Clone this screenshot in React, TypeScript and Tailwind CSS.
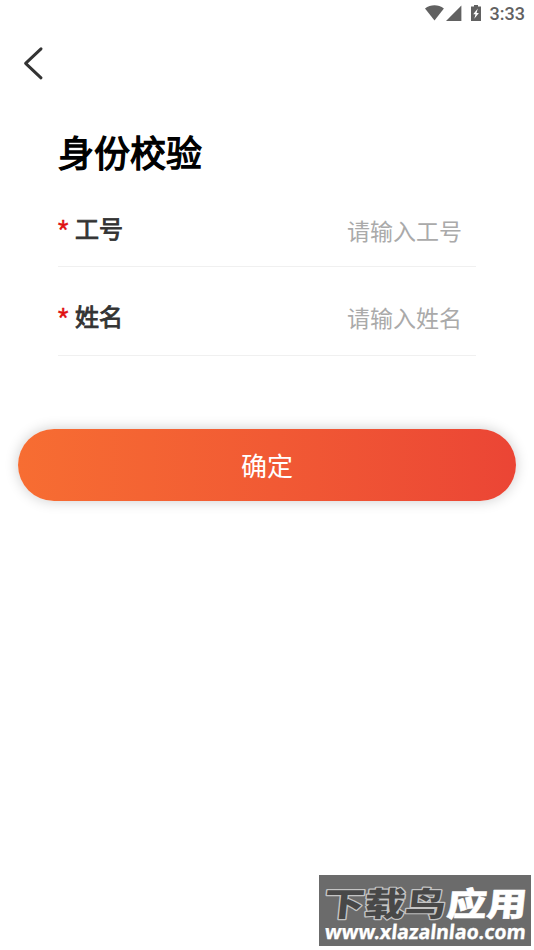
import { useState } from 'react'

interface Field {
  name: string
  label: string
  placeholder: string
}

const fields: Field[] = [
  { name: 'jobNumber', label: '工号', placeholder: '请输入工号' },
  { name: 'fullName', label: '姓名', placeholder: '请输入姓名' },
]

function StatusBar() {
  return (
    <div className="flex h-[27px] items-center justify-end pr-[9px] text-[#616161]">
      <svg className="h-[27px] w-[66px]" viewBox="0 0 66 27" fill="currentColor">
        {/* wifi */}
        <path d="M1 8.6C6.7 4.2 14.2 4.2 19.9 8.6L10.5 20.5Z" />
        {/* signal */}
        <path d="M37.4 5.5V21H22Z" />
        {/* charging battery */}
        <path
          fillRule="evenodd"
          d="M50 5h4v1.4h3V21H47V6.4h3ZM53.8 8.6l-4.6 5.6h2.3l-1.2 4.6 4.6-5.8h-2.3Z"
        />
      </svg>
      <span className="font-['Roboto',sans-serif] text-[18px] leading-[27px] font-medium">3:33</span>
    </div>
  )
}

function SiteBadge() {
  return (
    <div className="absolute top-[875px] left-[319px] h-[71px] w-[212px] bg-[#6b6b6b]">
      <svg className="h-full w-full" viewBox="0 0 212 71">
        <g
          transform="translate(8 0) skewX(-6)"
          fontFamily="'Noto Sans CJK SC', sans-serif"
          fontWeight="900"
          fontSize="33"
          strokeLinejoin="round"
        >
          <text
            x="0"
            y="41"
            textLength="122"
            lengthAdjust="spacingAndGlyphs"
            fill="#484848"
            stroke="#c4c4c4"
            strokeWidth="2.4"
            paintOrder="stroke"
          >
            下载鸟
          </text>
          <text
            x="123"
            y="41"
            textLength="80"
            lengthAdjust="spacingAndGlyphs"
            fill="#fff"
            stroke="#fff"
            strokeWidth="0.5"
          >
            应用
          </text>
        </g>
        <text
          transform="translate(12 0) skewX(-6)"
          x="0"
          y="64.5"
          textLength="201"
          lengthAdjust="spacingAndGlyphs"
          fontFamily="'Noto Sans', sans-serif"
          fontWeight="700"
          fontSize="20"
          fill="#fff"
          stroke="#fff"
          strokeWidth="0.3"
        >
          www.xlazalnlao.com
        </text>
      </svg>
    </div>
  )
}

export default function App() {
  const [values, setValues] = useState<Record<string, string>>({})

  return (
    <div className="relative h-[950px] w-[534px] overflow-hidden bg-white font-['Noto_Sans_CJK_SC',sans-serif]">
      <StatusBar />

      {/* Header */}
      <header className="flex h-[72px] items-center pl-[22px]">
        <button aria-label="返回">
          <svg
            className="h-[36px] w-[24px] text-[#333]"
            viewBox="0 0 24 36"
            fill="none"
            stroke="currentColor"
            strokeWidth="3"
            strokeLinecap="round"
            strokeLinejoin="round"
          >
            <path d="M19 3.8L3.6 18.3L19 32.8" />
          </svg>
        </button>
      </header>

      {/* Form */}
      <main className="px-[58px]">
        <h1 className="pt-[25px] pb-[2px] text-[36px] leading-[54px] font-normal text-black [-webkit-text-stroke:1.3px_#000]">
          身份校验
        </h1>
        <div>
          {fields.map((field) => (
            <label
              key={field.name}
              className="group flex h-[89px] items-center justify-between border-b border-[#f0f0f0] pt-[12px] pr-[14px] first:h-[87px] first:pt-[14px]"
            >
              <span className="flex items-center pb-[3px] text-[24px] leading-[36px] font-normal text-[#333] [-webkit-text-stroke:0.9px_#333] group-first:pb-[5px]">
                <span className="w-[17px] pt-[2px] font-['Roboto',sans-serif] text-[24px] text-[#e01010] [-webkit-text-stroke:0.4px_#e01010]">
                  *
                </span>
                {field.label}
              </span>
              <input
                className="h-[36px] w-[240px] bg-transparent text-right text-[23px] text-[#333] outline-none placeholder:text-[#aaa]"
                placeholder={field.placeholder}
                value={values[field.name] ?? ''}
                onChange={(e) => setValues({ ...values, [field.name]: e.target.value })}
              />
            </label>
          ))}
        </div>
      </main>

      <div className="px-[18px] pt-[73px]">
        <button className="h-[72px] w-full rounded-full bg-linear-to-r from-[#f76d32] to-[#eb4535] pb-[2px] text-[26px] text-white shadow-[0_0_14px_rgba(0,0,0,0.2)]">
          确定
        </button>
      </div>

      <SiteBadge />
    </div>
  )
}
